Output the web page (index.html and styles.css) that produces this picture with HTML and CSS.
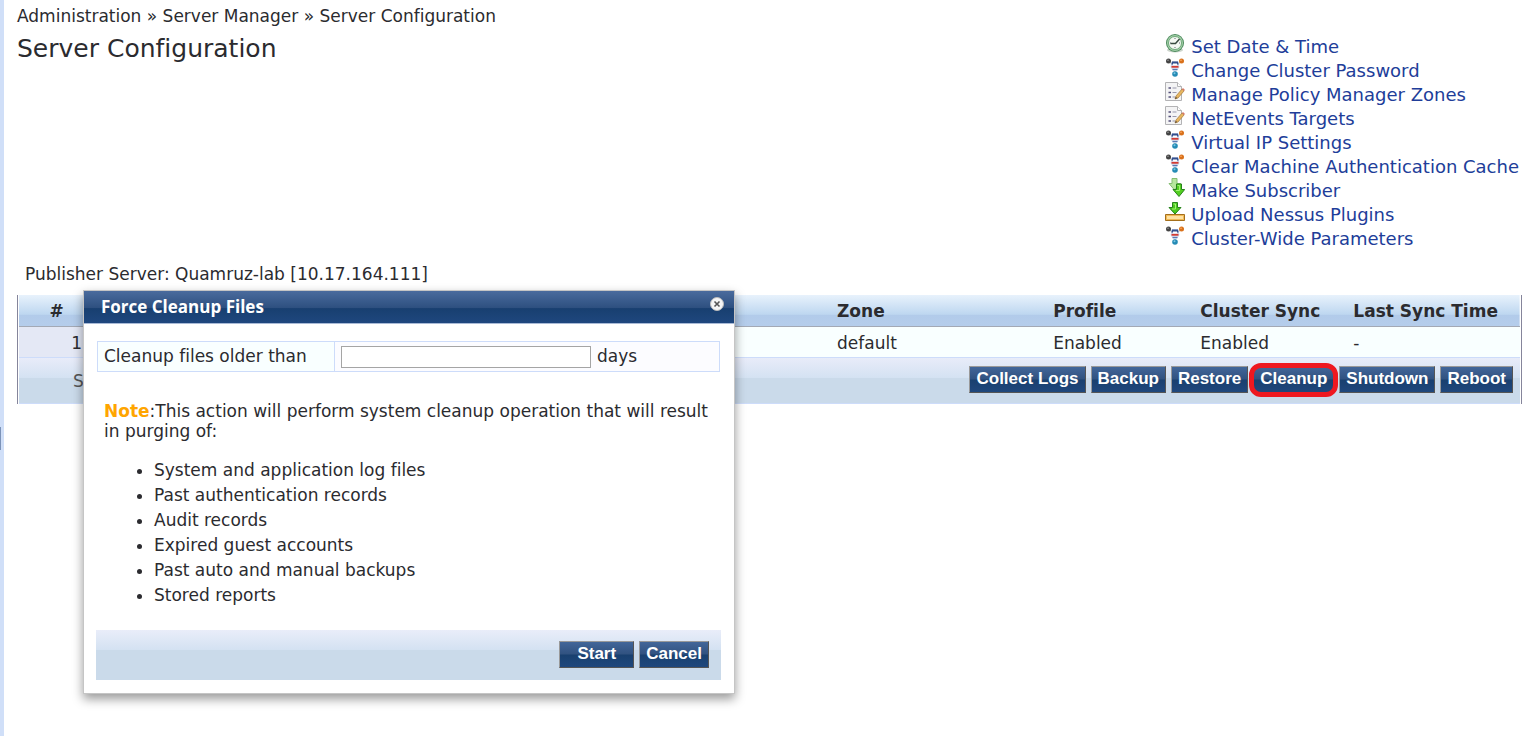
FILE: index.html
```html
<!DOCTYPE html>
<html lang="en">
<head>
    <meta charset="UTF-8">
    <meta name="viewport" content="width=device-width, initial-scale=1.0">
    <title>Server Configuration</title>
    <link rel="stylesheet" href="styles.css">
</head>
<body>
    <!-- shared icons -->
    <svg class="sprite" width="0" height="0" aria-hidden="true">
        <symbol id="icon-clock" viewBox="0 0 20 20">
            <ellipse cx="10" cy="16" rx="8" ry="2.500" fill="#ccd5cc"/>
            <circle cx="10" cy="9" r="9" fill="#4c8a5c"/>
            <circle cx="10" cy="9" r="8" fill="#a3cfa8"/>
            <circle cx="10" cy="9" r="6.500" fill="#f4f8f2" stroke="#6da778"/>
            <path d="M10 4v1M10 13v1M5 9h1M14 9h1" stroke="#667" stroke-width="1"/>
            <path d="M14.500 5L10.500 9.500H5.500" fill="none" stroke="#394b40" stroke-width="1.500"/>
        </symbol>
        <symbol id="icon-cluster" viewBox="0 0 20 20">
            <path d="M3 3l7 5 7-5M10 8v7" fill="none" stroke="#ddd" stroke-width="1.500"/>
            <circle cx="3.500" cy="3" r="2.500" fill="#444"/>
            <circle cx="3" cy="2.300" r=".8" fill="#999"/>
            <circle cx="16.500" cy="3" r="2.500" fill="#d9711b"/>
            <circle cx="16" cy="2.300" r=".8" fill="#ffb26b"/>
            <circle cx="10" cy="16" r="2.800" fill="#258bb5"/>
            <circle cx="9.500" cy="15.300" r="1" fill="#7cc6e2"/>
            <path d="M7 3h6l1.500 6-2.500 4H8L5.500 9z" fill="#d5dbec"/>
            <path d="M7 3.500h6l.7 3H6.300z" fill="#334f8d"/>
            <path d="M8 5.500h4v2H8z" fill="#fff"/>
            <path d="M6.500 8.800h7" stroke="#d33a32" stroke-width="1.800"/>
            <path d="M7.500 11.500h5" stroke="#597ab4" stroke-width="1.200"/>
        </symbol>
        <symbol id="icon-edit" viewBox="0 0 20 20">
            <path d="M.5.5h12l4 4v14H.5z" fill="#f4f4f5" stroke="#b3b3b5"/>
            <path d="M12.500.5v4h4" fill="#fff" stroke="#b3b3b5"/>
            <path d="M3.500 6h2.500M3.500 10.500h2.500M3.500 15h2.500" stroke="#55517b" stroke-width="1.500"/>
            <path d="M7.500 6h4M7.500 10.500h4M7.500 15h3" stroke="#9898ac"/>
            <path d="M11 14l6-7 2 2-6 7-3 1z" fill="#e8b760" stroke="#a4793c" stroke-width=".7"/>
            <path d="M17 7l1-1 2 2-1 1z" fill="#d87768"/>
            <path d="M10 17l1-2 1 1z" fill="#333"/>
        </symbol>
        <symbol id="icon-subscriber" viewBox="0 0 20 20">
            <path d="M7 .5h5v5h3.500L9.500 12 4 5.500h3z" fill="#b7e69e" stroke="#85bd72"/>
            <path d="M11.500 6h5v5.500h3.200L14 18.500 8 11.500h3.500z" fill="#53cf20" stroke="#27821c"/>
            <path d="M12.500 7.500h2v5H11" fill="none" stroke="#a3f477"/>
        </symbol>
        <symbol id="icon-upload" viewBox="0 0 20 20">
            <path d="M.5 12.500h19v6H.5z" fill="#f1ba57" stroke="#a46f1c"/>
            <path d="M2 14h16v3H2z" fill="#ffe2a2"/>
            <path d="M7.500 .5h5v5h3.500L10 12 4 5.500H7.500z" fill="#4bc81d" stroke="#27821c"/>
            <path d="M8.500 2h2v5H7" fill="none" stroke="#a3f477"/>
        </symbol>
    </svg>

    <main class="page">
        <nav class="breadcrumb">Administration » Server Manager » Server Configuration</nav>

        <div class="page-head">
            <h1>Server Configuration</h1>
            <ul class="actions">
                <li><svg><use href="#icon-clock"/></svg><a href="#">Set Date &amp; Time</a></li>
                <li><svg><use href="#icon-cluster"/></svg><a href="#">Change Cluster Password</a></li>
                <li><svg><use href="#icon-edit"/></svg><a href="#">Manage Policy Manager Zones</a></li>
                <li><svg><use href="#icon-edit"/></svg><a href="#">NetEvents Targets</a></li>
                <li><svg><use href="#icon-cluster"/></svg><a href="#">Virtual IP Settings</a></li>
                <li><svg><use href="#icon-cluster"/></svg><a href="#">Clear Machine Authentication Cache</a></li>
                <li><svg><use href="#icon-subscriber"/></svg><a href="#">Make Subscriber</a></li>
                <li><svg><use href="#icon-upload"/></svg><a href="#">Upload Nessus Plugins</a></li>
                <li><svg><use href="#icon-cluster"/></svg><a href="#">Cluster-Wide Parameters</a></li>
            </ul>
        </div>

        <p class="publisher">Publisher Server: Quamruz-lab [10.17.164.111]</p>

        <div class="grid">
            <table class="servers">
                <colgroup>
                    <col class="col-num">
                    <col class="col-name">
                    <col class="col-zone">
                    <col class="col-profile">
                    <col class="col-sync">
                    <col class="col-time">
                </colgroup>
                <thead>
                    <tr>
                        <th class="num">#</th>
                        <th></th>
                        <th>Zone</th>
                        <th>Profile</th>
                        <th>Cluster Sync</th>
                        <th>Last Sync Time</th>
                    </tr>
                </thead>
                <tbody>
                    <tr>
                        <td class="num">1</td>
                        <td></td>
                        <td>default</td>
                        <td>Enabled</td>
                        <td>Enabled</td>
                        <td>-</td>
                    </tr>
                </tbody>
            </table>
            <div class="grid-footer">
                <span class="count">S</span>
                <div class="buttons">
                    <button type="button" class="btn">Collect Logs</button>
                    <button type="button" class="btn">Backup</button>
                    <button type="button" class="btn">Restore</button>
                    <button type="button" class="btn marked">Cleanup</button>
                    <button type="button" class="btn">Shutdown</button>
                    <button type="button" class="btn">Reboot</button>
                </div>
            </div>
        </div>
    </main>

    <form class="dialog" role="dialog" aria-labelledby="dialog-title">
        <div class="dialog-title">
            <h2 id="dialog-title">Force Cleanup Files</h2>
            <button type="button" class="close" aria-label="Close">
                <svg viewBox="0 0 14 14">
                    <circle cx="7" cy="7" r="6.500" fill="#f5f5f5" stroke="#bbb"/>
                    <path d="M4.500 4.500l5 5M9.500 4.500l-5 5" stroke="#555" stroke-width="1.600"/>
                </svg>
            </button>
        </div>
        <div class="dialog-body">
            <div class="field">
                <label for="days">Cleanup files older than</label>
                <div class="value"><input type="text" id="days"><span>days</span></div>
            </div>
            <p class="note"><b>Note</b>:This action will perform system cleanup operation that will result in purging of:</p>
            <ul class="purge-list">
                <li>System and application log files</li>
                <li>Past authentication records</li>
                <li>Audit records</li>
                <li>Expired guest accounts</li>
                <li>Past auto and manual backups</li>
                <li>Stored reports</li>
            </ul>
            <div class="dialog-footer">
                <button type="submit" class="btn start">Start</button>
                <button type="button" class="btn">Cancel</button>
            </div>
        </div>
    </form>

    <div class="splitter"></div>
</body>
</html>
```
FILE: styles.css
```css
* {
    box-sizing: border-box;
}

body {
    margin: 0;
    min-height: 100vh;
    border-left: 4px solid #d0dff8;
    background: #fff;
    color: #2b2b2f;
    font-family: Verdana, "DejaVu Sans", sans-serif;
    font-size: 17px;
    font-variant-ligatures: none;
    line-height: 20px;
}

h1, h2, p, ul {
    margin: 0;
    padding: 0;
}

.sprite {
    position: absolute;
}

.page {
    padding: 6px 12px 0 13px;
}

.page-head {
    display: flex;
    justify-content: space-between;
    align-items: flex-start;
}

h1 {
    padding-top: 8px;
    font-size: 25px;
    font-weight: normal;
    line-height: 30px;
}

.actions {
    padding: 8px 3px 0 0;
    list-style: none;
    font-size: 18px;
    line-height: 24px;
}

.actions li {
    display: flex;
    gap: 6px;
}

.actions svg {
    width: 20px;
    height: 20px;
}

.actions a {
    padding-top: 1px;
    margin-bottom: -1px;
    color: #213d99;
    text-decoration: none;
}

.publisher {
    padding: 14px 8px 11px;
}

/* server table */
.grid {
    border: solid #85859b;
    border-width: 0 1px;
    padding: 0 1px;
}

.servers {
    width: 100%;
    table-layout: fixed;
    border-collapse: collapse;
}

.col-num { width: 5%; }
.col-name { width: 49.1%; }
.col-zone { width: 14.4%; }
.col-profile { width: 9.8%; }
.col-sync { width: 10.2%; }

.servers th,
.servers td {
    padding: 6px 6px 4px;
    text-align: left;
}

.servers th {
    height: 31px;
    border-bottom: 1px solid #a3a9b5;
}

.servers thead {
    background: linear-gradient(#e8f2fc, #bed7f0 62%, #b2cbea 66%, #b5cdeb);
}

.servers td {
    height: 31px;
    background: #f9ffff;
    border-bottom: 1px solid #cddcfa;
}

.servers th.num {
    text-align: center;
}

.servers td.num {
    padding-right: 12px;
    background: #e4e8f5;
    text-align: right;
}

.grid-footer {
    display: flex;
    justify-content: space-between;
    padding: 8px 7px 10px 54px;
    border-bottom: 1px solid #cddcfa;
    background: linear-gradient(#e8ecf9, #d4e2f2 44%, #cadaea 45%, #cadaea);
}

.count {
    padding-top: 5px;
    color: #555;
}

.buttons,
.dialog-footer {
    display: flex;
    gap: 5px;
}

.btn {
    height: 27px;
    padding: 0 6px 1px;
    border: 1px solid;
    border-color: #999 #555 #555 #999;
    background: linear-gradient(#426699, #315280 48%, #19406f 52%, #1f477c);
    color: #fff;
    font: bold 17px/24px Arial, "Liberation Sans", sans-serif;
}

.marked {
    position: relative;
}

/* red ring round the button */
.marked::after {
    content: "";
    position: absolute;
    inset: -4px -5px -5px;
    border: 5px solid #ee1820;
    border-radius: 12px;
}

/* dialog */
.dialog {
    position: absolute;
    top: 290px;
    left: 83px;
    width: 652px;
    border: 1px solid #c5c5c5;
    background: #fff;
    box-shadow: 0 5px 10px rgba(0, 0, 0, 0.4);
}

.dialog-title {
    display: flex;
    justify-content: space-between;
    align-items: flex-start;
    height: 33px;
    padding: 6px 10px 0 17px;
    border-bottom: 1px solid #a9bad6;
    background: linear-gradient(#4a6b9d, #2e5080 52%, #183f70 55%, #1f477e);
}

.dialog-title h2 {
    color: #fff;
    font-family: "Open Sans", sans-serif;
    font-size: 17px;
    line-height: 20px;
}

.close {
    width: 14px;
    height: 14px;
    padding: 0;
    border: 0;
    background: none;
}

.close svg {
    display: block;
}

.dialog-body {
    padding: 17px 13px 13px 12px;
}

.field {
    display: flex;
    height: 31px;
    margin: 0 1px;
    border: 1px solid #cddcfa;
}

.field label {
    width: 237px;
    padding: 4px 6px 5px;
    border-right: 1px solid #cddcfa;
    background: #f9ffff;
}

.field .value {
    display: flex;
    flex: 1;
    gap: 6px;
    padding: 4px 6px;
    background: #fcfcff;
}

.field input {
    width: 250px;
    height: 22px;
    border: 1px solid #a5a5a5;
    background: #fff;
}

.note {
    padding: 29px 8px 17px;
}

.note b {
    color: #ffa500;
}

.purge-list {
    padding: 0 0 0 58px;
    line-height: 25px;
}

.dialog-footer {
    justify-content: flex-end;
    height: 50px;
    margin-top: 22px;
    padding: 11px 12px;
    background: linear-gradient(#e9edf9, #d4e2f2 39%, #cadaea 40%, #cadaea);
}

.start {
    width: 75px;
}

/* handle of the collapsed side menu */
.splitter {
    position: absolute;
    top: 427px;
    left: 0;
    width: 1px;
    height: 23px;
    background: #7c93b8;
}
```
